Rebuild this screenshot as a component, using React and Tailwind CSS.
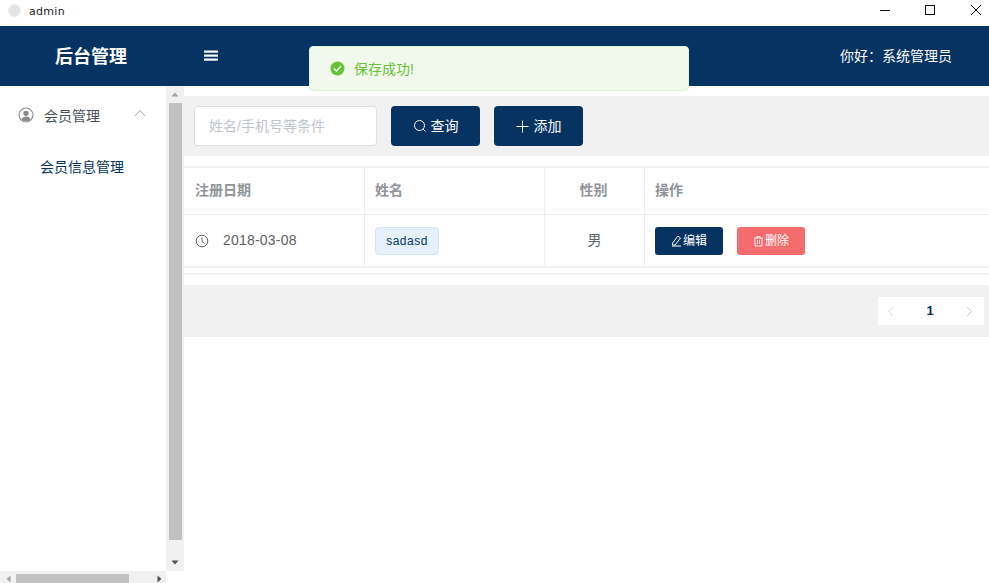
import React from "react";

function Th({ className = "", children }) {
  return <div className={"flex items-center pb-[2px] text-[14px] font-bold text-[#909399] border-r border-[#ebeef5] " + className}>{children}</div>;
}

export default function App() {
  return (
    <div className="relative w-[989px] h-[583px] overflow-hidden bg-white flex flex-col font-['Liberation_Sans','Noto_Sans_CJK_SC',sans-serif] text-[#606266]">
      {/* title bar */}
      <div className="h-[26px] shrink-0 flex items-center bg-white">
        <div className="ml-[8px] mb-[5px] w-[13px] h-[13px] rounded-full bg-[#e4e4e4] border border-[#eeeeee]" />
        <span className="ml-[8px] mb-[4px] text-[11px] tracking-[0.3px] text-[#222] font-['DejaVu_Sans',sans-serif] leading-none">admin</span>
        <div className="ml-auto mb-[4px] flex items-center text-[#111]">
          <svg width="12" height="12" viewBox="0 0 12 12" className="mr-[33px]"><path d="M1 5.5H11" stroke="#111" strokeWidth="1" /></svg>
          <svg width="12" height="12" viewBox="0 0 12 12" className="mr-[34px]"><rect x="1.5" y="0.5" width="9" height="9" fill="none" stroke="#111" /></svg>
          <svg width="12" height="12" viewBox="0 0 12 12" className="mr-[7px]"><path d="M1 0L11 10M11 0L1 10" stroke="#111" strokeWidth="1" /></svg>
        </div>
      </div>

      {/* header */}
      <div className="h-[60px] shrink-0 bg-[#063361] flex items-center text-white">
        <div className="w-[182px] mt-[1px] text-center text-[18px] font-bold leading-none">后台管理</div>
        <svg width="14" height="12" viewBox="0 0 14 12" className="ml-[22px]" fill="#fff">
          <rect x="0" y="0.5" width="14" height="2.2" />
          <rect x="0" y="4.5" width="14" height="2.2" />
          <rect x="0" y="8.5" width="14" height="2.2" />
        </svg>
        <div className="ml-auto mr-[37px] text-[14px] leading-none">你好：系统管理员</div>
      </div>

      {/* body */}
      <div className="flex-1 flex min-h-0">
        <div className="w-[184px] shrink-0 flex flex-col">
          <div className="flex-1 flex min-h-0">
            {/* sidebar */}
            <div className="w-[166px] shrink-0">
              <div className="h-[60px] flex items-center pl-[18px]">
                <svg width="16" height="16" viewBox="0 0 16 16" className="mb-[2px]">
                  <circle cx="8" cy="8" r="7" fill="none" stroke="#8a8a8a" strokeWidth="1.1" />
                  <circle cx="8" cy="6.3" r="2.6" fill="#8a8a8a" />
                  <path d="M3.4 12.6C4.4 10.3 6 9.6 8 9.6C10 9.6 11.6 10.3 12.6 12.6C10.6 14.6 5.4 14.6 3.4 12.6Z" fill="#8a8a8a" />
                </svg>
                <span className="ml-[10px] text-[14px] text-[#4a4f57] leading-none">会员管理</span>
                <svg width="12" height="8" viewBox="0 0 12 8" className="ml-[34px] mb-[6px]">
                  <path d="M1 7L6 1.5L11 7" fill="none" stroke="#a8a8a8" strokeWidth="1" />
                </svg>
              </div>
              <div className="h-[42px] flex items-center pl-[40px] text-[14px] text-[#063361] leading-none">会员信息管理</div>
            </div>
            {/* vertical scrollbar */}
            <div className="w-[18px] shrink-0 bg-[#f1f1f1] flex flex-col items-center">
              <div className="h-[17px] shrink-0 flex items-center justify-center">
                <svg width="8" height="5" viewBox="0 0 8 5"><path d="M4 0.5L7.5 4.5H0.5Z" fill="#a3a3a3" /></svg>
              </div>
              <div className="w-[13px] h-[437px] bg-[#c1c1c1]" />
              <div className="flex-1" />
              <div className="h-[17px] shrink-0 flex items-center justify-center">
                <svg width="8" height="5" viewBox="0 0 8 5"><path d="M4 4.5L7.5 0.5H0.5Z" fill="#505050" /></svg>
              </div>
            </div>
          </div>
          {/* horizontal scrollbar */}
          <div className="h-[12px] shrink-0 w-[166px] bg-[#f1f1f1] flex items-end">
            <div className="w-[16px] h-[9px] flex items-center justify-center">
              <svg width="5" height="8" viewBox="0 0 5 8"><path d="M0.5 4L4.5 0.5V7.5Z" fill="#a3a3a3" /></svg>
            </div>
            <div className="w-[113px] h-[9px] bg-[#c1c1c1]" />
            <div className="flex-1 h-[9px] flex items-center justify-end pr-[4px]">
              <svg width="5" height="8" viewBox="0 0 5 8"><path d="M4.5 4L0.5 0.5V7.5Z" fill="#505050" /></svg>
            </div>
          </div>
        </div>

        {/* main */}
        <div className="flex-1 min-w-0 pt-[10px]">
          <div className="h-[60px] bg-[#f1f1f1] flex items-center pl-[10px]">
            <div className="w-[183px] h-[40px] bg-white border border-[#dcdfe6] rounded-[4px] flex items-center pl-[14px] text-[14px] text-[#c0c4cc]">姓名/手机号等条件</div>
            <button className="ml-[14px] w-[89px] h-[40px] bg-[#063361] rounded-[4px] flex items-center justify-center text-white text-[14px]">
              <svg width="14" height="14" viewBox="0 0 14 14" className="mr-[4px]">
                <circle cx="6.5" cy="6.5" r="5" fill="none" stroke="#fff" strokeWidth="1" />
                <path d="M10 10L12.5 12.5" stroke="#fff" strokeWidth="1" />
              </svg>
              查询
            </button>
            <button className="ml-[14px] w-[89px] h-[40px] bg-[#063361] rounded-[4px] flex items-center justify-center text-white text-[14px]">
              <svg width="13" height="13" viewBox="0 0 13 13" className="mr-[5px]">
                <path d="M6.5 0.5V12.5M0.5 6.5H12.5" stroke="#fff" strokeWidth="1" />
              </svg>
              添加
            </button>
          </div>

          {/* table */}
          <div className="mt-[10px] border-t-2 border-[#f0f2f5]">
            <div className="flex h-[47px] border-b border-[#ebeef5]">
              <Th className="w-[181px] pl-[11px]">注册日期</Th>
              <Th className="w-[180px] pl-[10px]">姓名</Th>
              <Th className="w-[100px] justify-center pr-[2px]">性别</Th>
              <Th className="flex-1 pl-[10px] border-r-0">操作</Th>
            </div>
            <div className="flex h-[53px] border-b-2 border-[#f0f2f5]">
              <div className="w-[181px] pl-[11px] flex items-center border-r border-[#ebeef5] text-[14px] text-[#606266]">
                <svg width="14" height="14" viewBox="0 0 14 14">
                  <circle cx="7" cy="7" r="5.8" fill="none" stroke="#606266" strokeWidth="1" />
                  <path d="M7 3.5V7.5L9.5 9.5" fill="none" stroke="#606266" strokeWidth="1" />
                </svg>
                <span className="ml-[14px] tracking-[0.2px]">2018-03-08</span>
              </div>
              <div className="w-[180px] pl-[10px] flex items-center border-r border-[#ebeef5]">
                <span className="h-[28px] w-[64px] flex items-center justify-center bg-[#e6f1fb] border border-[#d5e6f6] rounded-[4px] text-[12px] tracking-[0.5px] text-[#063361]">sadasd</span>
              </div>
              <div className="w-[100px] flex items-center justify-center border-r border-[#ebeef5] text-[14px] text-[#606266]">男</div>
              <div className="flex-1 pl-[10px] flex items-center">
                <button className="w-[68px] h-[28px] bg-[#063361] rounded-[3px] text-white text-[12px] flex items-center justify-center">
                  <svg width="11" height="12" viewBox="0 0 11 12" className="mr-px">
                    <path d="M7 1L9.5 3L4 10H1.5L1.5 8Z M1 11H10" fill="none" stroke="#fff" strokeWidth="1" />
                  </svg>
                  编辑
                </button>
                <button className="ml-[14px] w-[68px] h-[28px] bg-[#f56c6c] rounded-[3px] text-white text-[12px] flex items-center justify-center">
                  <svg width="11" height="12" viewBox="0 0 11 12" className="mr-px">
                    <path d="M1 3H10M4 3V1.5H7V3M2 3V11H9V3M4.5 5V9M6.5 5V9" fill="none" stroke="#fff" strokeWidth="0.9" />
                  </svg>
                  删除
                </button>
              </div>
            </div>
            <div className="h-[7px] border-b-2 border-[#f0f2f5]" />
          </div>

          {/* pagination */}
          <div className="mt-[10px] h-[52px] bg-[#f1f1f1] flex items-center justify-end pr-[5px]">
            <div className="w-[106px] h-[28px] bg-white flex items-center justify-between pl-[9px] pr-[11px]">
              <svg width="7" height="11" viewBox="0 0 7 11"><path d="M6 1L1.5 5.5L6 10" fill="none" stroke="#d6d8dc" strokeWidth="1" /></svg>
              <span className="text-[13px] font-bold text-[#063361]">1</span>
              <svg width="7" height="11" viewBox="0 0 7 11"><path d="M1 1L5.5 5.5L1 10" fill="none" stroke="#c0c4cc" strokeWidth="1" /></svg>
            </div>
          </div>
        </div>
      </div>

      {/* toast */}
      <div className="absolute left-[309px] top-[46px] w-[380px] h-[45px] bg-[#f0f9eb] border border-[#e1f3d8] rounded-[4px] flex items-center pl-[20px]">
        <svg width="15" height="15" viewBox="0 0 15 15">
          <circle cx="7.5" cy="7.5" r="7" fill="#67c23a" />
          <path d="M4 7.5L6.5 10L11 5" fill="none" stroke="#fff" strokeWidth="1.4" />
        </svg>
        <span className="ml-[9px] text-[14px] text-[#67c23a] leading-none">保存成功!</span>
      </div>
    </div>
  );
}
